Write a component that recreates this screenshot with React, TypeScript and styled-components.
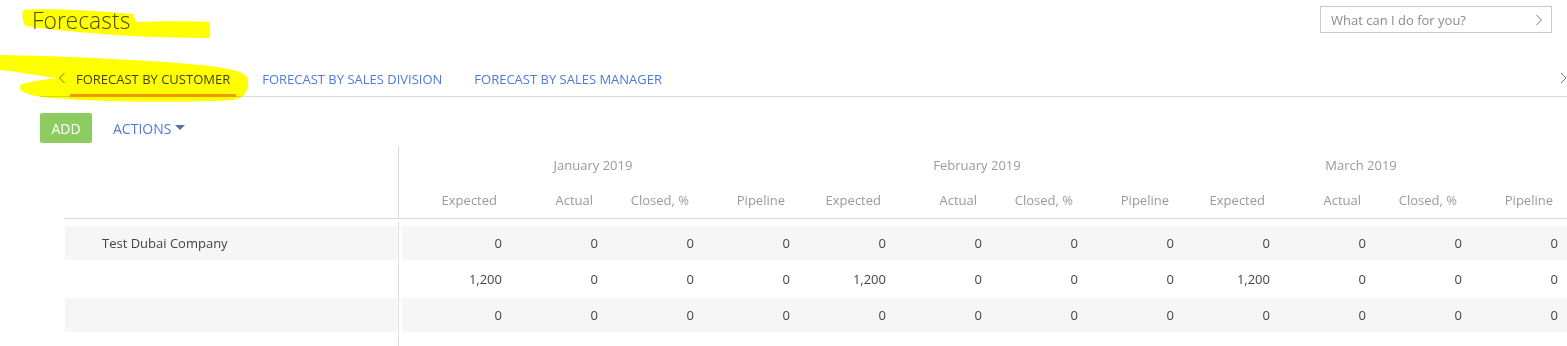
import React from "react";
import styled, { createGlobalStyle } from "styled-components";

const GlobalStyle = createGlobalStyle`
	html, body {
		margin: 0;
		padding: 0;
		background: #fff;
	}
	body {
		font-family: "Open Sans", "Liberation Sans", Arial, sans-serif;
		color: #444;
	}
	* {
		box-sizing: border-box;
	}
`;

const Page = styled.div`
	position: relative;
	width: 1567px;
	height: 346px;
	overflow: hidden;
`;

const TopBar = styled.div`
	display: flex;
	justify-content: space-between;
	align-items: flex-start;
	padding: 0 15px 0 32px;
	height: 33px;
`;

const Title = styled.h1`
	margin: 5px 0 0;
	font-family: "Open Sans Light", "Open Sans", sans-serif;
	font-size: 23px;
	line-height: 30px;
	font-weight: 300;
	color: #4a4a4a;
`;

const SearchBox = styled.div`
	margin-top: 6px;
	width: 232px;
	height: 27px;
	border: 1px solid #c9c9c9;
	display: flex;
	align-items: center;
	justify-content: space-between;
	padding: 0 8px 0 10px;
	font-size: 13px;
	color: #8c8c8c;
`;

const TabBar = styled.div`
	margin: 27px 0 0 40px;
	height: 37px;
	border-bottom: 1px solid #dadada;
	display: flex;
	align-items: center;
	justify-content: space-between;
`;

const TabStrip = styled.div`
	display: flex;
	align-items: center;
	height: 100%;
	padding-left: 18px;
	gap: 4px;
`;

const TabList = styled.div`
	display: flex;
	align-items: center;
	height: 100%;
	gap: 20px;
`;

const Tab = styled.div<{ active?: boolean }>`
	position: relative;
	height: 100%;
	display: flex;
	align-items: center;
	padding: 1px 6px 0;
	font-size: 13px;
	text-transform: uppercase;
	color: ${(p) => (p.active ? "#444" : "#4f7cd8")};
	white-space: nowrap;
	${(p) =>
		p.active &&
		`
		&::after {
			content: "";
			position: absolute;
			left: 0;
			right: 0;
			bottom: -1px;
			height: 3px;
			background: #f39800;
		}
	`}
`;

const Chevron = styled.svg`
	display: block;
	flex: none;
`;

const Toolbar = styled.div`
	display: flex;
	align-items: center;
	margin: 16px 0 0 40px;
	gap: 21px;
`;

const AddButton = styled.button`
	height: 30px;
	width: 52px;
	border: none;
	border-radius: 2px;
	background: #8dcc60;
	color: #fff;
	font-family: inherit;
	font-size: 14px;
	padding: 0;
	cursor: pointer;
`;

const ActionsButton = styled.div`
	display: flex;
	align-items: center;
	gap: 4px;
	font-size: 14px;
	color: #4f7cd8;
	cursor: pointer;
`;

const Caret = styled.span`
	width: 0;
	height: 0;
	border-left: 5px solid transparent;
	border-right: 5px solid transparent;
	border-top: 5px solid #56719f;
	margin-top: -2px;
`;

const Grid = styled.div`
	margin: 3px 0 0 64px;
`;

const HeaderRow = styled.div`
	display: flex;
	height: 73px;
	border-bottom: 1px solid #dcdcdc;
`;

const LeftHead = styled.div`
	width: 335px;
	flex: none;
	border-right: 1px solid #dcdcdc;
`;

const RightHead = styled.div`
	padding: 0 0 4px 2px;
`;

const MonthRow = styled.div`
	display: flex;
	height: 38px;
	align-items: center;
`;

const MonthCell = styled.div`
	width: 384px;
	text-align: center;
	font-size: 13px;
	color: #9a9a9a;
`;

const ColRow = styled.div`
	display: flex;
	height: 31px;
	align-items: center;
`;

const ColCell = styled.div`
	width: 96px;
	text-align: right;
	font-size: 13px;
	color: #9a9a9a;
`;

const Body = styled.div`
	display: flex;
	margin-top: 3px;
	height: 124px;
`;

const LeftCol = styled.div`
	width: 335px;
	flex: none;
	border-right: 1px solid #dcdcdc;
	padding: 4px 1px 0;
	display: flex;
	flex-direction: column;
	gap: 2px;
`;

const RightCol = styled.div`
	flex: 1;
	padding: 4px 0 0 3px;
	display: flex;
	flex-direction: column;
	gap: 2px;
`;

const NameRow = styled.div<{ striped?: boolean }>`
	height: 34px;
	display: flex;
	align-items: center;
	padding-left: 37px;
	font-size: 13px;
	color: #444;
	background: ${(p) => (p.striped ? "#f6f6f6" : "transparent")};
`;

const DataRow = styled.div<{ striped?: boolean }>`
	height: 34px;
	display: flex;
	align-items: center;
	padding-left: 4px;
	background: ${(p) => (p.striped ? "#f6f6f6" : "transparent")};
`;

const DataCell = styled.div`
	width: 96px;
	flex: none;
	text-align: right;
	font-size: 13px;
	color: #444;
`;

const Highlight = styled.svg`
	position: absolute;
	left: 0;
	top: 0;
	pointer-events: none;
	mix-blend-mode: multiply;
`;

const months = ["January 2019", "February 2019", "March 2019"];
const columns = ["Expected", "Actual", "Closed, %", "Pipeline"];
const zeros = Array(12).fill("0");

const rows = [
	{ name: "Test Dubai Company", values: zeros },
	{ name: "", values: ["1,200", "0", "0", "0", "1,200", "0", "0", "0", "1,200", "0", "0", "0"] },
	{ name: "", values: zeros },
];

const tabs = ["Forecast by customer", "Forecast by sales division", "Forecast by sales manager"];

export default function App() {
	return (
		<Page>
			<GlobalStyle />
			<TopBar>
				<Title>Forecasts</Title>
				<SearchBox>
					<span>What can I do for you?</span>
					<Chevron width="8" height="12" viewBox="0 0 8 12">
						<polyline points="1.5,1 6.5,6 1.5,11" fill="none" stroke="#777" strokeWidth="1" />
					</Chevron>
				</SearchBox>
			</TopBar>

			<TabBar>
				<TabStrip>
					<Chevron width="8" height="12" viewBox="0 0 8 12">
						<polyline points="6.5,1 1.5,6 6.5,11" fill="none" stroke="#777" strokeWidth="1" />
					</Chevron>
					<TabList>
						{tabs.map((t, i) => (
							<Tab key={t} active={i === 0}>
								{t}
							</Tab>
						))}
					</TabList>
				</TabStrip>
				<Chevron width="7" height="12" viewBox="0 0 7 12">
					<polyline points="1,1 6,6 1,11" fill="none" stroke="#777" strokeWidth="1" />
				</Chevron>
			</TabBar>

			<Toolbar>
				<AddButton>ADD</AddButton>
				<ActionsButton>
					ACTIONS
					<Caret />
				</ActionsButton>
			</Toolbar>

			<Grid>
				<HeaderRow>
					<LeftHead />
					<RightHead>
						<MonthRow>
							{months.map((m) => (
								<MonthCell key={m}>{m}</MonthCell>
							))}
						</MonthRow>
						<ColRow>
							{months.map((m) =>
								columns.map((c) => <ColCell key={m + c}>{c}</ColCell>)
							)}
						</ColRow>
					</RightHead>
				</HeaderRow>
				<Body>
					<LeftCol>
						{rows.map((r, i) => (
							<NameRow key={i} striped={i !== 1}>
								{r.name}
							</NameRow>
						))}
					</LeftCol>
					<RightCol>
						{rows.map((r, i) => (
							<DataRow key={i} striped={i !== 1}>
								{r.values.map((v, j) => (
									<DataCell key={j}>{v}</DataCell>
								))}
							</DataRow>
						))}
					</RightCol>
				</Body>
			</Grid>

			{/* yellow marker strokes drawn on top of the screenshot */}
			<Highlight width="260" height="110" viewBox="0 0 260 110">
				<path
					d="M23,10 C40,8 90,10 133,14 L136,22 C160,21 190,21 210,22 L210,38 C180,38 150,37 130,36 C100,34 60,31 25,26 C22,20 22,14 23,10 Z"
					fill="#ffff00"
				/>
				<path
					d="M0,55 C60,56 150,60 200,65 C230,68 248,72 248,80 C249,90 245,98 233,100 C180,103 100,102 50,98 C30,96 18,92 20,86 C21,83 35,81 57,78 C40,76 20,72 0,70 Z"
					fill="#ffff00"
				/>
			</Highlight>
		</Page>
	);
}
